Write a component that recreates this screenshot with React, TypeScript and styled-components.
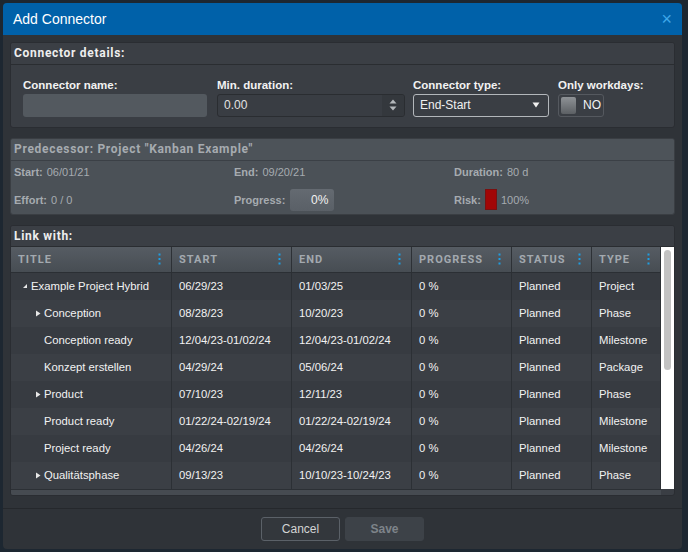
import styled, { createGlobalStyle } from "styled-components";

const GlobalStyle = createGlobalStyle`
	html, body {
		margin: 0;
		padding: 0;
		background: #1d2731;
		font-family: "Liberation Sans", Arial, sans-serif;
	}
	* {
		box-sizing: border-box;
	}
`;

type Row = {
	title: string;
	level: number;
	tree?: "open" | "closed";
	start: string;
	end: string;
	type: string;
};

const rows: Row[] = [
	{ title: "Example Project Hybrid", level: 0, tree: "open", start: "06/29/23", end: "01/03/25", type: "Project" },
	{ title: "Conception", level: 1, tree: "closed", start: "08/28/23", end: "10/20/23", type: "Phase" },
	{ title: "Conception ready", level: 1, start: "12/04/23-01/02/24", end: "12/04/23-01/02/24", type: "Milestone" },
	{ title: "Konzept erstellen", level: 1, start: "04/29/24", end: "05/06/24", type: "Package" },
	{ title: "Product", level: 1, tree: "closed", start: "07/10/23", end: "12/11/23", type: "Phase" },
	{ title: "Product ready", level: 1, start: "01/22/24-02/19/24", end: "01/22/24-02/19/24", type: "Milestone" },
	{ title: "Project ready", level: 1, start: "04/26/24", end: "04/26/24", type: "Milestone" },
	{ title: "Qualitätsphase", level: 1, tree: "closed", start: "09/13/23", end: "10/10/23-10/24/23", type: "Phase" },
];

const columns = ["TITLE", "START", "END", "PROGRESS", "STATUS", "TYPE"];

const MenuDots = () => (
	<svg width="3" height="12" viewBox="0 0 3 12">
		<rect x="0.5" y="0.5" width="2" height="2" fill="#1e9ee2" />
		<rect x="0.5" y="5" width="2" height="2" fill="#1e9ee2" />
		<rect x="0.5" y="9.5" width="2" height="2" fill="#1e9ee2" />
	</svg>
);

const TreeArrow = ({ open }: { open: boolean }) =>
	open ? (
		<svg width="6" height="6" viewBox="0 0 6 6">
			<polygon points="5,1 5,5 1,5" fill="#e8e8e8" />
		</svg>
	) : (
		<svg width="6" height="7" viewBox="0 0 6 7">
			<polygon points="1,0.5 5.5,3.5 1,6.5" fill="#e8e8e8" />
		</svg>
	);

export default function App() {
	return (
		<Page>
			<GlobalStyle />
			<Dialog>
				<TitleBar>
					<Title>Add Connector</Title>
					<Close>×</Close>
				</TitleBar>

				<Body>
					<Panel>
						<PanelHeader>Connector details:</PanelHeader>
						<Details>
							<Field $width={186}>
								<Label>Connector name:</Label>
								<NameInput defaultValue="" />
							</Field>
							<Field $width={188}>
								<Label>Min. duration:</Label>
								<NumberBox>
									<NumberValue>0.00</NumberValue>
									<Spinner>
										<svg width="8" height="12" viewBox="0 0 8 12">
											<polygon points="4,0.5 7.5,4.5 0.5,4.5" fill="#b4b8bc" />
											<polygon points="0.5,7.5 7.5,7.5 4,11.5" fill="#b4b8bc" />
										</svg>
									</Spinner>
								</NumberBox>
							</Field>
							<Field $width={137}>
								<Label>Connector type:</Label>
								<Select>
									End-Start
									<svg width="8" height="6" viewBox="0 0 8 6">
										<polygon points="0.5,0.5 7.5,0.5 4,5.5" fill="#f0f0f0" />
									</svg>
								</Select>
							</Field>
							<Field $width={86}>
								<Label>Only workdays:</Label>
								<Toggle>
									<Knob />
									NO
								</Toggle>
							</Field>
						</Details>
					</Panel>

					<Panel $muted>
						<PanelHeader $muted>Predecessor: Project "Kanban Example"</PanelHeader>
						<InfoGrid>
							<Info>
								<b>Start:</b> 06/01/21
							</Info>
							<Info>
								<b>End:</b> 09/20/21
							</Info>
							<Info>
								<b>Duration:</b> 80 d
							</Info>
							<Info>
								<b>Effort:</b> 0 / 0
							</Info>
							<Info>
								<b>Progress:</b>
								<ProgressBox>0%</ProgressBox>
							</Info>
							<Info>
								<b>Risk:</b>
								<RiskSwatch />
								100%
							</Info>
						</InfoGrid>
					</Panel>

					<Panel>
						<PanelHeader $compact>Link with:</PanelHeader>
						<GridWrap>
							<GridMain>
								<HeaderRow>
									{columns.map((c) => (
										<HeaderCell key={c}>
											{c}
											<MenuDots />
										</HeaderCell>
									))}
								</HeaderRow>
								{rows.map((r, i) => (
									<DataRow key={r.title} $odd={i % 2 === 1}>
										<TitleCell $level={r.level}>
											<ArrowSlot>{r.tree && <TreeArrow open={r.tree === "open"} />}</ArrowSlot>
											{r.title}
										</TitleCell>
										<Cell>{r.start}</Cell>
										<Cell>{r.end}</Cell>
										<Cell>0 %</Cell>
										<Cell>Planned</Cell>
										<Cell>{r.type}</Cell>
									</DataRow>
								))}
								<HScroll />
							</GridMain>
							<VScroll>
								<Thumb />
							</VScroll>
						</GridWrap>
					</Panel>
				</Body>

				<Footer>
					<Button>Cancel</Button>
					<Button $disabled>Save</Button>
				</Footer>
			</Dialog>
		</Page>
	);
}

const Page = styled.div`
	height: 552px;
	padding: 3px 6px 0 3px;
	overflow: hidden;
`;

const Dialog = styled.div`
	width: 679px;
	height: 546px;
	background: #2f3338;
	border-radius: 4px;
	overflow: hidden;
	display: flex;
	flex-direction: column;
`;

const TitleBar = styled.div`
	height: 32px;
	background: #0061a9;
	display: flex;
	align-items: center;
	justify-content: space-between;
	padding: 0 10px 0 10px;
`;

const Title = styled.span`
	color: #ffffff;
	font-size: 14px;
`;

const Close = styled.span`
	color: #3ea7ea;
	font-size: 18px;
	line-height: 1;
`;

const Body = styled.div`
	padding: 7px 7px 12px;
	display: flex;
	flex-direction: column;
	gap: 10px;
`;

const Panel = styled.div<{ $muted?: boolean }>`
	background: ${(p) => (p.$muted ? "#4b5157" : "#3a3e44")};
	border: 1px solid ${(p) => (p.$muted ? "#3a3e43" : "#2a2d32")};
	border-radius: 3px;
	overflow: hidden;
`;

const PanelHeader = styled.div<{ $muted?: boolean; $compact?: boolean }>`
	height: ${(p) => (p.$compact ? "20px" : "22px")};
	padding: 0 3px;
	display: flex;
	align-items: center;
	font-family: Roboto, "Liberation Sans", sans-serif;
	font-weight: 700;
	font-size: 12px;
	letter-spacing: 0.7px;
	color: ${(p) => (p.$muted ? "#a6abb0" : "#eeeeee")};
	background: ${(p) => (p.$muted ? "#4d5359" : "#3b3f45")};
	border-bottom: ${(p) => (p.$compact ? "none" : `1px solid ${p.$muted ? "#3b4046" : "#2a2d31"}`)};
`;

const Details = styled.div`
	display: flex;
	gap: 8px;
	padding: 14px 12px 10px;
`;

const Field = styled.div<{ $width: number }>`
	width: ${(p) => p.$width}px;
	display: flex;
	flex-direction: column;
`;

const Label = styled.label`
	height: 15px;
	font-size: 11.5px;
	font-weight: 700;
	color: #f2f2f2;
	white-space: nowrap;
`;

const NameInput = styled.input`
	height: 23px;
	width: 184px;
	border: none;
	border-radius: 3px;
	background: #53595f;
	outline: none;
`;

const NumberBox = styled.div`
	height: 23px;
	display: flex;
	border: 1px solid #2a2d31;
	border-radius: 3px;
	background: #393d43;
	overflow: hidden;
`;

const NumberValue = styled.span`
	flex: 1;
	padding-left: 6px;
	display: flex;
	align-items: center;
	color: #e2e2e2;
	font-size: 12px;
`;

const Spinner = styled.span`
	width: 22px;
	display: flex;
	align-items: center;
	justify-content: center;
	background: #34383d;
`;

const Select = styled.div`
	width: 136px;
	height: 23px;
	display: flex;
	align-items: center;
	justify-content: space-between;
	padding: 0 8px 0 6px;
	border: 1px solid #b3b7bb;
	border-radius: 3px;
	background: #3a3e44;
	color: #f0f0f0;
	font-size: 12px;
`;

const Toggle = styled.div`
	width: 46px;
	height: 23px;
	display: flex;
	align-items: center;
	gap: 7px;
	padding-left: 2px;
	border: 1px solid #55595f;
	border-radius: 3px;
	background: #3a3e44;
	color: #f4f4f4;
	font-size: 12px;
`;

const Knob = styled.span`
	width: 15px;
	height: 17px;
	border-radius: 2px;
	background: linear-gradient(#8e9296, #5c6064);
`;

const InfoGrid = styled.div`
	display: grid;
	grid-template-columns: 220px 220px 1fr;
	grid-auto-rows: 22px;
	row-gap: 6px;
	padding: 0 3px 3px;
`;

const Info = styled.div`
	display: flex;
	align-items: center;
	gap: 4px;
	font-size: 11px;
	color: #a6abb0;

	b {
		font-weight: 700;
	}
`;

const ProgressBox = styled.span`
	width: 44px;
	height: 22px;
	margin-left: 1px;
	padding-right: 6px;
	display: flex;
	align-items: center;
	justify-content: flex-end;
	border-radius: 3px;
	background: linear-gradient(#646a71, #5a6067);
	color: #f2f2f2;
	font-size: 12px;
`;

const RiskSwatch = styled.span`
	width: 12px;
	height: 21px;
	background: #a10606;
	border: 1px solid #7a1010;
`;

const GridWrap = styled.div`
	display: flex;
	border-top: 1px solid #2a2d31;
`;

const GridMain = styled.div`
	width: 650px;
`;

const gridColumns = "161px 120px 120px 100px 80px 69px";

const HeaderRow = styled.div`
	height: 26px;
	display: grid;
	grid-template-columns: ${gridColumns};
	background: linear-gradient(#565c63, #474d53);
	border-bottom: 1px solid #2b2f34;
`;

const HeaderCell = styled.div`
	display: flex;
	align-items: center;
	justify-content: space-between;
	padding: 0 10px 0 7px;
	border-right: 1px solid #2d3136;
	font-family: Roboto, "Liberation Sans", sans-serif;
	font-weight: 700;
	font-size: 11px;
	letter-spacing: 1px;
	color: #a3a9af;
`;

const DataRow = styled.div<{ $odd: boolean }>`
	height: 27px;
	display: grid;
	grid-template-columns: ${gridColumns};
	background: ${(p) => (p.$odd ? "#3b3f45" : "#373b41")};
`;

const Cell = styled.div`
	display: flex;
	align-items: center;
	padding-left: 7px;
	border-right: 1px solid #2c3035;
	font-size: 11.3px;
	color: #f2f2f2;
	white-space: nowrap;
	overflow: hidden;
`;

const TitleCell = styled(Cell)<{ $level: number }>`
	padding-left: ${(p) => 11 + p.$level * 13}px;
`;

const ArrowSlot = styled.span`
	width: 9px;
	display: inline-flex;
	align-items: center;
`;

const HScroll = styled.div`
	height: 6px;
	background: #464b51;
	border-top: 1px solid #2c3035;
`;

const VScroll = styled.div`
	width: 13px;
	background: #ffffff;
	padding: 3px 3px 0;
	margin-bottom: 6px;
`;

const Thumb = styled.div`
	width: 7px;
	height: 120px;
	border-radius: 4px;
	background: #c2c2c2;
`;

const Footer = styled.div`
	margin-top: auto;
	height: 42px;
	display: flex;
	align-items: center;
	justify-content: center;
	gap: 5px;
	border-top: 1px solid #25282c;
`;

const Button = styled.button<{ $disabled?: boolean }>`
	width: 79px;
	height: 24px;
	border-radius: 3px;
	border: 1px solid ${(p) => (p.$disabled ? "#3d4248" : "#5b6168")};
	background: ${(p) => (p.$disabled ? "#3d4248" : "#33373c")};
	color: ${(p) => (p.$disabled ? "#7e848a" : "#d4d4d4")};
	font-family: "Liberation Sans", Arial, sans-serif;
	font-size: 12px;
	font-weight: ${(p) => (p.$disabled ? 700 : 400)};
`;
